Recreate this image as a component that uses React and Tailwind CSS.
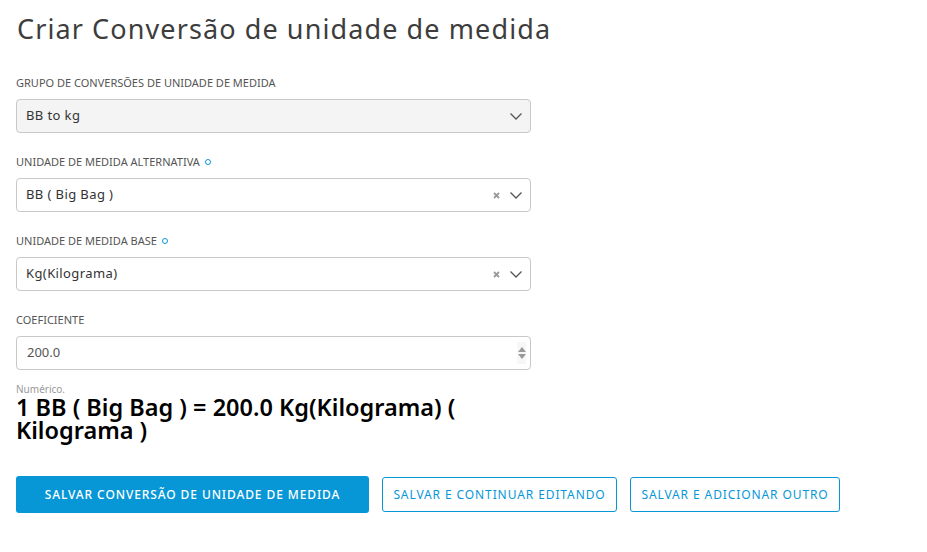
import React from 'react';

const Chevron = () => (
  <svg width="14" height="14" viewBox="0 0 14 14" fill="none" stroke="#555" strokeWidth="1.3">
    <path d="M1.5 4.5 L7 10 L12.5 4.5" />
  </svg>
);

const Clear = () => (
  <svg width="7" height="7" viewBox="0 0 7 7" className="mr-[9px]" stroke="#999" strokeWidth="1.8">
    <path d="M1 1 L6 6 M6 1 L1 6" />
  </svg>
);

const Label = ({ children, required }) => (
  <label className="flex items-center text-[11px] uppercase text-[#555] mb-[9px] h-[14px]">
    {children}
    {required && (
      <span className="ml-[5px] inline-block w-[6px] h-[6px] rounded-full border-[1.5px] border-[#0797d7]"></span>
    )}
  </label>
);

const App = () => {
  return (
    <div className="bg-white min-h-[552px] w-[927px] px-4 pt-[12px]" style={{ fontFamily: '"Noto Sans", "Open Sans", sans-serif' }}>
      <h1 className="text-[27px] leading-[34px] text-[#3d3d3d] tracking-[1.1px] ml-[1px]">
        Criar Conversão de unidade de medida
      </h1>

      <div className="w-[515px] mt-[30px]">
        <Label>Grupo de conversões de unidade de medida</Label>
        <div className="h-[34px] flex items-center justify-between bg-[#f4f4f4] border border-[#c8c8c8] rounded-[4px] pl-[9px] pr-[7px] text-[13px] text-[#333]">
          <span className="tracking-[0.4px]">BB to kg</span>
          <Chevron />
        </div>

        <div className="mt-[22px]">
          <Label required>Unidade de medida alternativa</Label>
          <div className="h-[34px] flex items-center justify-between bg-white border border-[#c8c8c8] rounded-[4px] pl-[9px] pr-[7px] text-[13px] text-[#333]">
            <span className="tracking-[0.4px]">BB ( Big Bag )</span>
            <div className="flex items-center">
              <Clear />
              <Chevron />
            </div>
          </div>
        </div>

        <div className="mt-[22px]">
          <Label required>Unidade de medida base</Label>
          <div className="h-[34px] flex items-center justify-between bg-white border border-[#c8c8c8] rounded-[4px] pl-[9px] pr-[7px] text-[13px] text-[#333]">
            <span className="tracking-[0.4px]">Kg(Kilograma)</span>
            <div className="flex items-center">
              <Clear />
              <Chevron />
            </div>
          </div>
        </div>

        <div className="mt-[22px]">
          <Label>Coeficiente</Label>
          <div className="h-[34px] flex items-center justify-between bg-white border border-[#c8c8c8] rounded-[4px] pl-[10px] pr-[4px] text-[13px] text-[#555]">
            <span>200.0</span>
            <div className="flex flex-col items-center justify-center gap-[2px] bg-[#f7f7f7] w-[9px] h-[22px]">
              <svg width="8" height="5" viewBox="0 0 8 5"><path d="M0 5 L4 0 L8 5 Z" fill="#9a9a9a" /></svg>
              <svg width="8" height="5" viewBox="0 0 8 5"><path d="M0 0 L4 5 L8 0 Z" fill="#9a9a9a" /></svg>
            </div>
          </div>
        </div>

        <p className="mt-[13px] text-[10px] leading-[13px] text-[#999]">Numérico.</p>
        <p className="text-[23.5px] leading-[23px] font-semibold text-black">
          1 BB ( Big Bag ) = 200.0 Kg(Kilograma) ( Kilograma )
        </p>
      </div>

      <div className="flex items-center mt-[34px] gap-[13px]">
        <button className="h-[37px] w-[353px] rounded-[3px] bg-[#0797d7] text-white text-[12px] uppercase tracking-[0.9px] font-medium">
          Salvar conversão de unidade de medida
        </button>
        <button className="h-[35px] w-[235px] rounded-[3px] border border-[#0797d7] bg-white text-[#0797d7] text-[12px] uppercase tracking-[0.9px]">
          Salvar e continuar editando
        </button>
        <button className="h-[35px] w-[210px] rounded-[3px] border border-[#0797d7] bg-white text-[#0797d7] text-[12px] uppercase tracking-[0.9px]">
          Salvar e adicionar outro
        </button>
      </div>
    </div>
  );
};

export default App;
